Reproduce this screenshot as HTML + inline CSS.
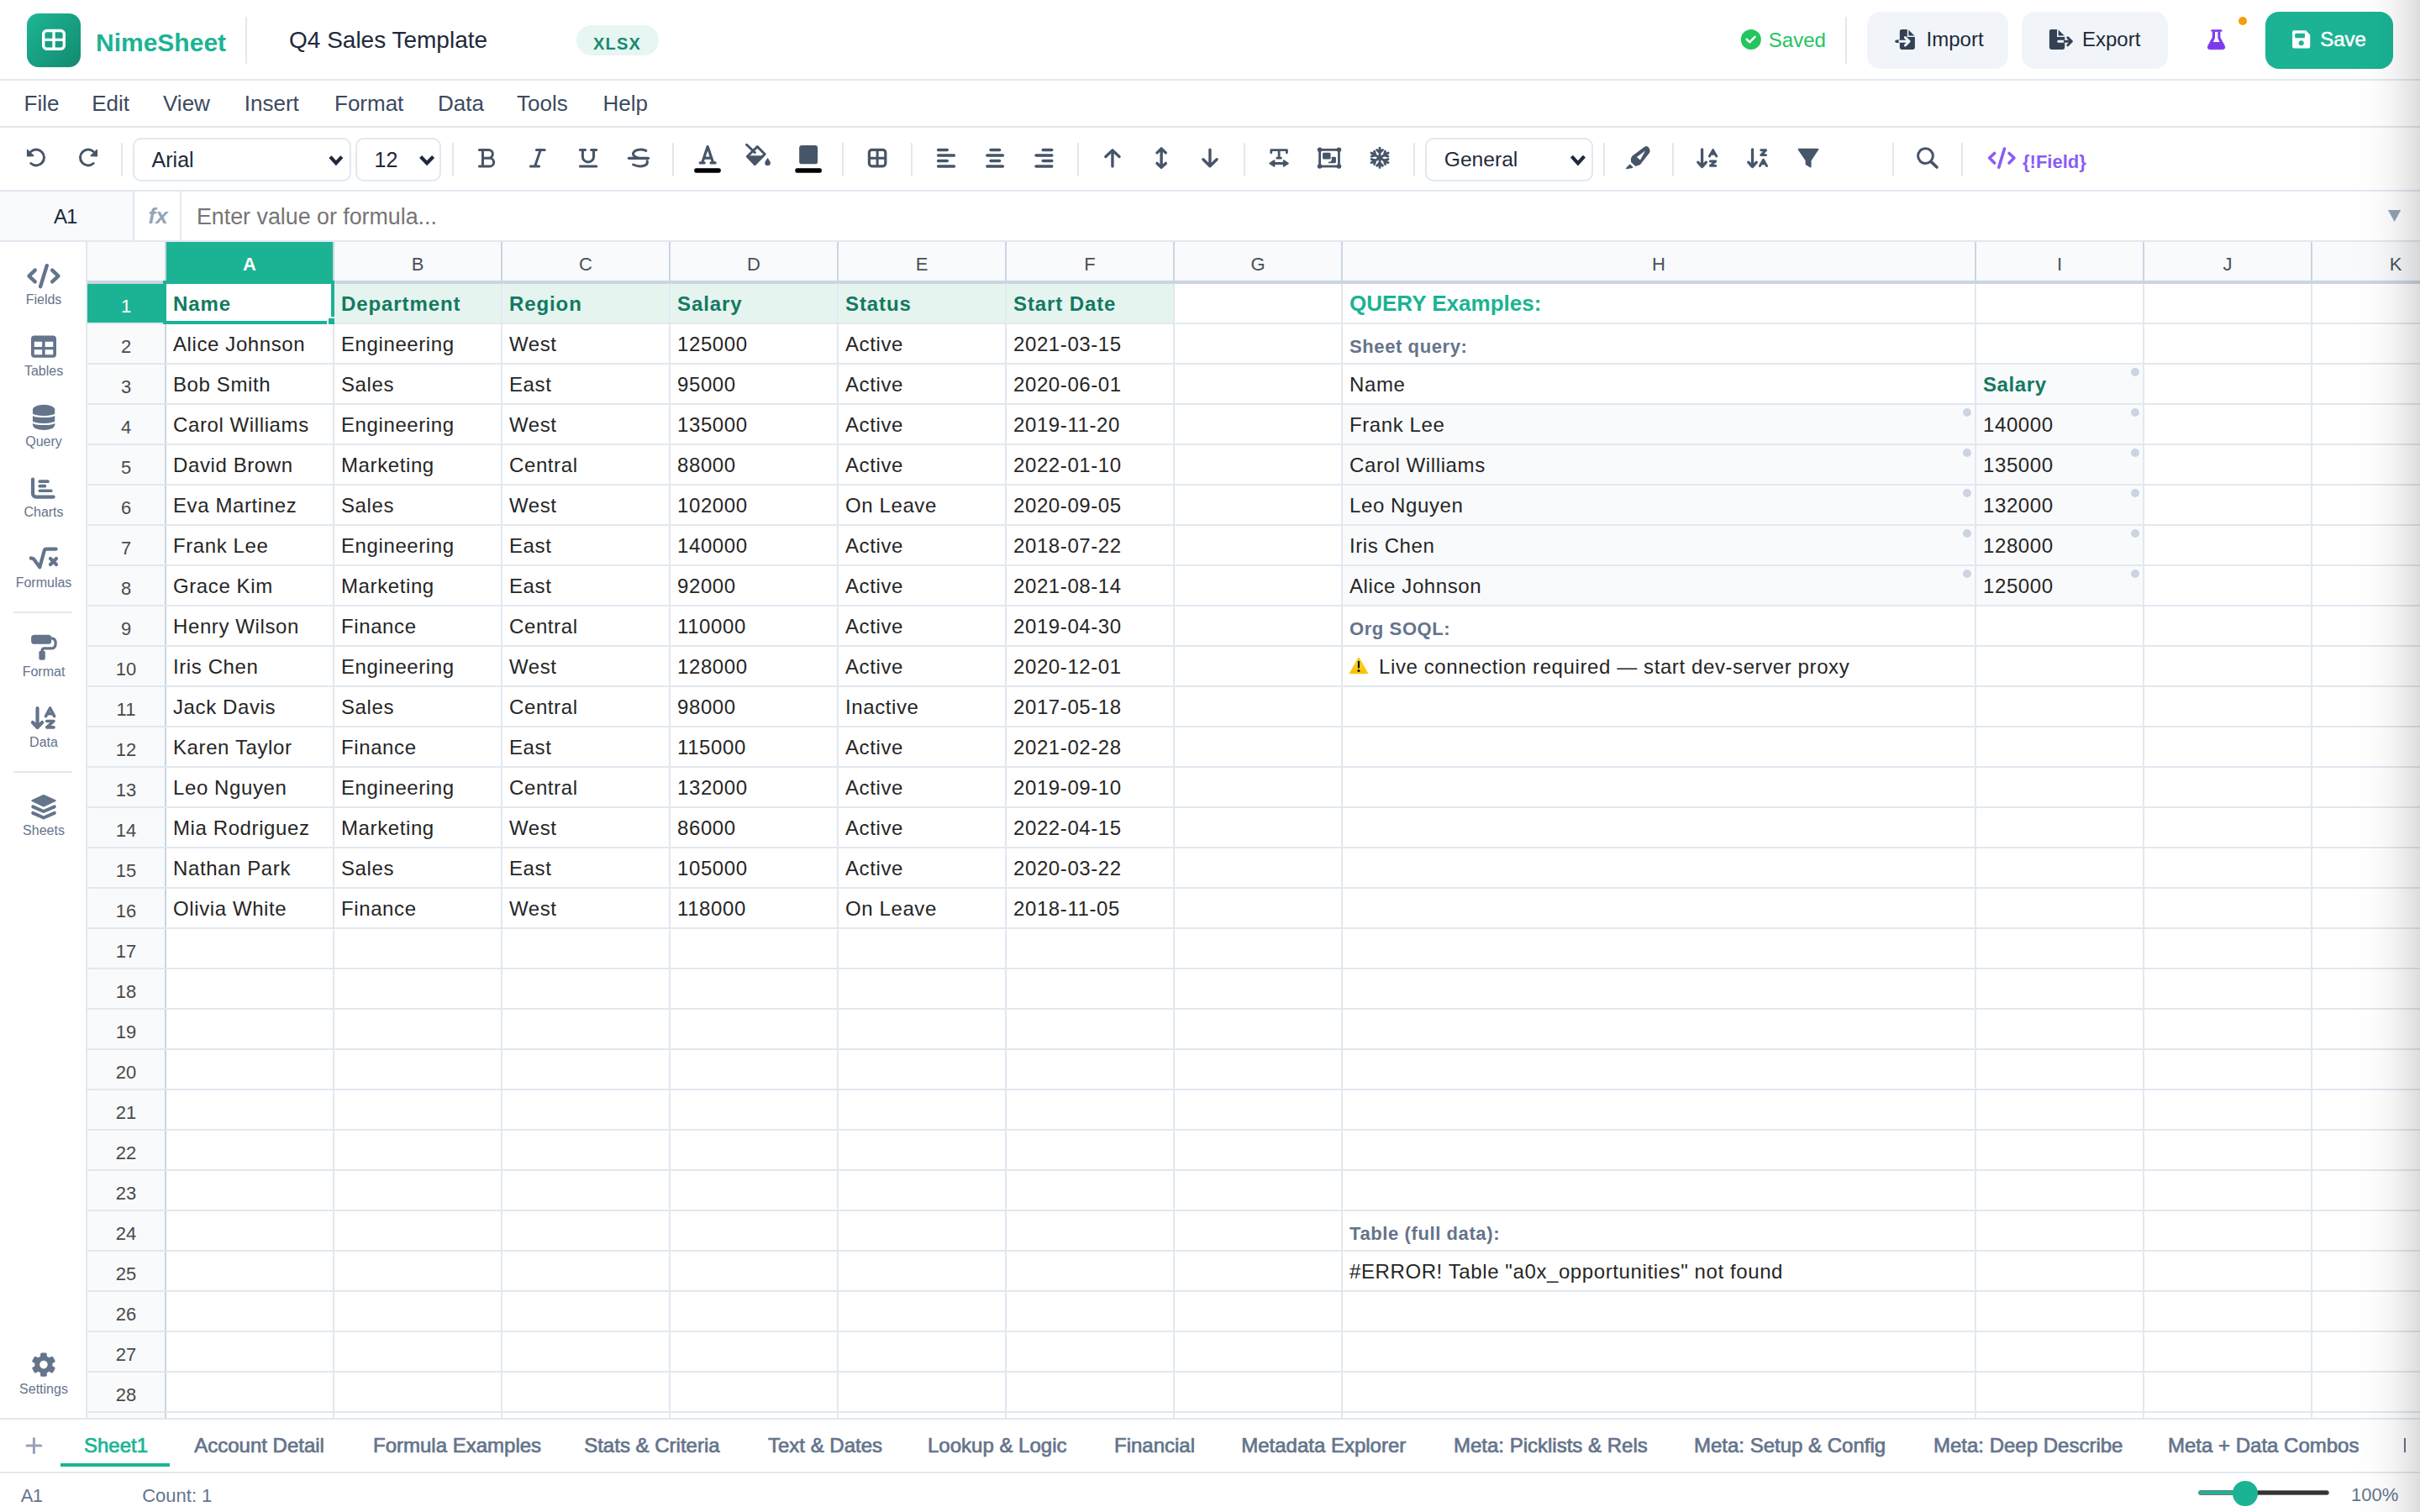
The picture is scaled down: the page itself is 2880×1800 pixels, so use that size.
<!DOCTYPE html><html><head><meta charset="utf-8"><style>
*{box-sizing:border-box;margin:0;padding:0}
html,body{width:1440px;height:900px;overflow:hidden;background:#fff;font-family:"Liberation Sans",sans-serif;}
.a{position:absolute}
.t{position:absolute;white-space:pre;line-height:1}
.hl{position:absolute;height:1px;background:#e2e8f0}
.vl{position:absolute;width:1px;background:#e2e8f0}
.cell{position:absolute;white-space:pre;font-size:12px;letter-spacing:0.3px;color:#262626;line-height:1;padding-left:4px;overflow:hidden}
.ch{position:absolute;top:144px;height:23px;text-align:center;font-size:11px;line-height:1;padding-top:8.0px;color:#4a5058;background:#f8fafc}
.rh{position:absolute;left:52px;width:46px;text-align:center;font-size:11px;line-height:1;color:#4a4a4a;background:#f8fafc;overflow:hidden}
.tab{position:absolute;font-size:12px;-webkit-text-stroke:0.35px currentColor;letter-spacing:0;color:#64748b;white-space:pre;line-height:1}
.sl{position:absolute;width:52px;left:0;text-align:center;font-size:8px;color:#64748b;line-height:1}
#ov{position:absolute;left:0;top:0;width:1440px;height:900px;overflow:visible}
@media (min-width:2000px){html{zoom:2}}
</style></head><body>
<div class="hl" style="left:0;top:47px;width:1440px"></div>
<div class="a" style="left:16px;top:8px;width:32px;height:32px;border-radius:7px;background:linear-gradient(135deg,#1db696,#128a6e)"></div>
<div class="t" style="left:57px;top:17.75px;font-size:15px;font-weight:bold;color:#1bb394">NimeSheet</div>
<div class="vl" style="left:146px;top:10px;height:28px"></div>
<div class="t" style="left:172px;top:16.88px;font-size:14px;color:#1e293b">Q4 Sales Template</div>
<div class="a" style="left:343px;top:15px;width:49px;height:18px;border-radius:9px;background:#e7f6f2"></div>
<div class="t" style="left:353px;top:20.82px;font-size:10px;font-weight:bold;letter-spacing:0.6px;color:#178a6e">XLSX</div>
<div class="t" style="left:1052.4px;top:17.83px;font-size:12px;color:#22c55e">Saved</div>
<div class="vl" style="left:1098px;top:10px;height:28px"></div>
<div class="a" style="left:1111px;top:7px;width:84px;height:34px;border-radius:8px;background:#f1f5f9"></div>
<div class="t" style="left:1146.3px;top:17.73px;font-size:12px;color:#1e293b">Import</div>
<div class="a" style="left:1203px;top:7px;width:87px;height:34px;border-radius:8px;background:#f1f5f9"></div>
<div class="t" style="left:1239px;top:17.73px;font-size:12px;color:#1e293b">Export</div>
<div class="a" style="left:1332px;top:10px;width:5px;height:5px;border-radius:50%;background:#f59e0b"></div>
<div class="a" style="left:1348px;top:7px;width:76px;height:34px;border-radius:8px;background:#1bb394"></div>
<div class="t" style="left:1380.6px;top:17.68px;font-size:12px;color:#fff;-webkit-text-stroke:0.25px #fff">Save</div>
<div class="hl" style="left:0;top:75px;width:1440px"></div>
<div class="t" style="left:14.3px;top:55.05px;font-size:13px;color:#3b4a5e">File</div>
<div class="t" style="left:54.6px;top:55.05px;font-size:13px;color:#3b4a5e">Edit</div>
<div class="t" style="left:97px;top:55.05px;font-size:13px;color:#3b4a5e">View</div>
<div class="t" style="left:145.4px;top:55.05px;font-size:13px;color:#3b4a5e">Insert</div>
<div class="t" style="left:199px;top:55.05px;font-size:13px;color:#3b4a5e">Format</div>
<div class="t" style="left:260.5px;top:55.05px;font-size:13px;color:#3b4a5e">Data</div>
<div class="t" style="left:307.5px;top:55.05px;font-size:13px;color:#3b4a5e">Tools</div>
<div class="t" style="left:358.7px;top:55.05px;font-size:13px;color:#3b4a5e">Help</div>
<div class="hl" style="left:0;top:113px;width:1440px"></div>
<div class="vl" style="left:72.0px;top:85px;height:20px"></div>
<div class="vl" style="left:269.2px;top:85px;height:20px"></div>
<div class="vl" style="left:400.0px;top:85px;height:20px"></div>
<div class="vl" style="left:501.0px;top:85px;height:20px"></div>
<div class="vl" style="left:542.0px;top:85px;height:20px"></div>
<div class="vl" style="left:641.0px;top:85px;height:20px"></div>
<div class="vl" style="left:740.1px;top:85px;height:20px"></div>
<div class="vl" style="left:841.0px;top:85px;height:20px"></div>
<div class="vl" style="left:954.1px;top:85px;height:20px"></div>
<div class="vl" style="left:994.9px;top:85px;height:20px"></div>
<div class="vl" style="left:1126.0px;top:85px;height:20px"></div>
<div class="vl" style="left:1166.9px;top:85px;height:20px"></div>
<div class="a" style="left:79px;top:82px;width:130px;height:26px;border:1px solid #e2e8f0;border-radius:5px"></div>
<div class="t" style="left:90.3px;top:89.01px;font-size:12.5px;color:#1e293b">Arial</div>
<div class="a" style="left:211.5px;top:82px;width:51px;height:26px;border:1px solid #e2e8f0;border-radius:5px"></div>
<div class="t" style="left:222.8px;top:89.01px;font-size:12.5px;color:#1e293b">12</div>
<div class="a" style="left:848.1px;top:82.1px;width:99.7px;height:25.8px;border:1px solid #e2e8f0;border-radius:5px"></div>
<div class="t" style="left:859.4px;top:88.82px;font-size:12.3px;color:#1e293b">General</div>
<div class="a" style="left:0;top:114px;width:79px;height:29px;background:#f8fafc"></div>
<div class="vl" style="left:79px;top:114px;height:29px"></div>
<div class="vl" style="left:107px;top:114px;height:29px"></div>
<div class="hl" style="left:0;top:143px;width:1440px"></div>
<div class="t" style="left:32px;top:122.78px;font-size:12px;letter-spacing:-0.5px;color:#1e293b">A1</div>
<div class="t" style="left:88.3px;top:122.0px;font-size:13px;font-weight:bold;font-style:italic;color:#94a3b8">fx</div>
<div class="t" style="left:117px;top:122.63px;font-size:13.4px;color:#757575">Enter value or formula...</div>
<div class="vl" style="left:51px;top:144px;height:700px"></div>
<div class="sl" style="top:174.73px">Fields</div>
<div class="sl" style="top:216.75px">Tables</div>
<div class="sl" style="top:259.15px">Query</div>
<div class="sl" style="top:300.8px">Charts</div>
<div class="sl" style="top:342.95px">Formulas</div>
<div class="sl" style="top:395.8px">Format</div>
<div class="sl" style="top:437.85px">Data</div>
<div class="sl" style="top:490.72px">Sheets</div>
<div class="sl" style="top:822.8px">Settings</div>
<div class="hl" style="left:8px;top:364px;width:35px"></div>
<div class="hl" style="left:8px;top:459px;width:35px"></div>
<div class="a" style="left:52px;top:144px;width:46px;height:23px;background:#f8fafc"></div>
<div class="ch" style="left:99px;width:99px;background:#1bb394;color:#fff;font-weight:bold">A</div>
<div class="vl" style="left:198px;top:169px;height:675px"></div>
<div class="vl" style="left:198px;top:144px;height:23px;background:#cbd5e1"></div>
<div class="ch" style="left:199px;width:99px;background:#f8fafc;color:#4a5058">B</div>
<div class="vl" style="left:298px;top:169px;height:675px"></div>
<div class="vl" style="left:298px;top:144px;height:23px;background:#cbd5e1"></div>
<div class="ch" style="left:299px;width:99px;background:#f8fafc;color:#4a5058">C</div>
<div class="vl" style="left:398px;top:169px;height:675px"></div>
<div class="vl" style="left:398px;top:144px;height:23px;background:#cbd5e1"></div>
<div class="ch" style="left:399px;width:99px;background:#f8fafc;color:#4a5058">D</div>
<div class="vl" style="left:498px;top:169px;height:675px"></div>
<div class="vl" style="left:498px;top:144px;height:23px;background:#cbd5e1"></div>
<div class="ch" style="left:499px;width:99px;background:#f8fafc;color:#4a5058">E</div>
<div class="vl" style="left:598px;top:169px;height:675px"></div>
<div class="vl" style="left:598px;top:144px;height:23px;background:#cbd5e1"></div>
<div class="ch" style="left:599px;width:99px;background:#f8fafc;color:#4a5058">F</div>
<div class="vl" style="left:698px;top:169px;height:675px"></div>
<div class="vl" style="left:698px;top:144px;height:23px;background:#cbd5e1"></div>
<div class="ch" style="left:699px;width:99px;background:#f8fafc;color:#4a5058">G</div>
<div class="vl" style="left:798px;top:169px;height:675px"></div>
<div class="vl" style="left:798px;top:144px;height:23px;background:#cbd5e1"></div>
<div class="ch" style="left:799px;width:376px;background:#f8fafc;color:#4a5058">H</div>
<div class="vl" style="left:1175px;top:169px;height:675px"></div>
<div class="vl" style="left:1175px;top:144px;height:23px;background:#cbd5e1"></div>
<div class="ch" style="left:1176px;width:99px;background:#f8fafc;color:#4a5058">I</div>
<div class="vl" style="left:1275px;top:169px;height:675px"></div>
<div class="vl" style="left:1275px;top:144px;height:23px;background:#cbd5e1"></div>
<div class="ch" style="left:1276px;width:99px;background:#f8fafc;color:#4a5058">J</div>
<div class="vl" style="left:1375px;top:169px;height:675px"></div>
<div class="vl" style="left:1375px;top:144px;height:23px;background:#cbd5e1"></div>
<div class="ch" style="left:1376px;width:99px;background:#f8fafc;color:#4a5058">K</div>
<div class="vl" style="left:1475px;top:169px;height:675px"></div>
<div class="vl" style="left:1475px;top:144px;height:23px;background:#cbd5e1"></div>
<div class="vl" style="left:98px;top:144px;height:700px;background:#cbd5e1"></div>
<div class="a" style="left:52px;top:167px;width:1388px;height:2px;background:#cbd5e1"></div>
<div class="rh" style="top:169px;height:23px;padding-top:7.8px;background:#1bb394;color:#fff">1</div>
<div class="hl" style="left:52px;top:192px;width:1388px"></div>
<div class="rh" style="top:193px;height:23px;padding-top:7.8px;background:#f8fafc;color:#4a4a4a">2</div>
<div class="hl" style="left:52px;top:216px;width:1388px"></div>
<div class="rh" style="top:217px;height:23px;padding-top:7.8px;background:#f8fafc;color:#4a4a4a">3</div>
<div class="hl" style="left:52px;top:240px;width:1388px"></div>
<div class="rh" style="top:241px;height:23px;padding-top:7.8px;background:#f8fafc;color:#4a4a4a">4</div>
<div class="hl" style="left:52px;top:264px;width:1388px"></div>
<div class="rh" style="top:265px;height:23px;padding-top:7.8px;background:#f8fafc;color:#4a4a4a">5</div>
<div class="hl" style="left:52px;top:288px;width:1388px"></div>
<div class="rh" style="top:289px;height:23px;padding-top:7.8px;background:#f8fafc;color:#4a4a4a">6</div>
<div class="hl" style="left:52px;top:312px;width:1388px"></div>
<div class="rh" style="top:313px;height:23px;padding-top:7.8px;background:#f8fafc;color:#4a4a4a">7</div>
<div class="hl" style="left:52px;top:336px;width:1388px"></div>
<div class="rh" style="top:337px;height:23px;padding-top:7.8px;background:#f8fafc;color:#4a4a4a">8</div>
<div class="hl" style="left:52px;top:360px;width:1388px"></div>
<div class="rh" style="top:361px;height:23px;padding-top:7.8px;background:#f8fafc;color:#4a4a4a">9</div>
<div class="hl" style="left:52px;top:384px;width:1388px"></div>
<div class="rh" style="top:385px;height:23px;padding-top:7.8px;background:#f8fafc;color:#4a4a4a">10</div>
<div class="hl" style="left:52px;top:408px;width:1388px"></div>
<div class="rh" style="top:409px;height:23px;padding-top:7.8px;background:#f8fafc;color:#4a4a4a">11</div>
<div class="hl" style="left:52px;top:432px;width:1388px"></div>
<div class="rh" style="top:433px;height:23px;padding-top:7.8px;background:#f8fafc;color:#4a4a4a">12</div>
<div class="hl" style="left:52px;top:456px;width:1388px"></div>
<div class="rh" style="top:457px;height:23px;padding-top:7.8px;background:#f8fafc;color:#4a4a4a">13</div>
<div class="hl" style="left:52px;top:480px;width:1388px"></div>
<div class="rh" style="top:481px;height:23px;padding-top:7.8px;background:#f8fafc;color:#4a4a4a">14</div>
<div class="hl" style="left:52px;top:504px;width:1388px"></div>
<div class="rh" style="top:505px;height:23px;padding-top:7.8px;background:#f8fafc;color:#4a4a4a">15</div>
<div class="hl" style="left:52px;top:528px;width:1388px"></div>
<div class="rh" style="top:529px;height:23px;padding-top:7.8px;background:#f8fafc;color:#4a4a4a">16</div>
<div class="hl" style="left:52px;top:552px;width:1388px"></div>
<div class="rh" style="top:553px;height:23px;padding-top:7.8px;background:#f8fafc;color:#4a4a4a">17</div>
<div class="hl" style="left:52px;top:576px;width:1388px"></div>
<div class="rh" style="top:577px;height:23px;padding-top:7.8px;background:#f8fafc;color:#4a4a4a">18</div>
<div class="hl" style="left:52px;top:600px;width:1388px"></div>
<div class="rh" style="top:601px;height:23px;padding-top:7.8px;background:#f8fafc;color:#4a4a4a">19</div>
<div class="hl" style="left:52px;top:624px;width:1388px"></div>
<div class="rh" style="top:625px;height:23px;padding-top:7.8px;background:#f8fafc;color:#4a4a4a">20</div>
<div class="hl" style="left:52px;top:648px;width:1388px"></div>
<div class="rh" style="top:649px;height:23px;padding-top:7.8px;background:#f8fafc;color:#4a4a4a">21</div>
<div class="hl" style="left:52px;top:672px;width:1388px"></div>
<div class="rh" style="top:673px;height:23px;padding-top:7.8px;background:#f8fafc;color:#4a4a4a">22</div>
<div class="hl" style="left:52px;top:696px;width:1388px"></div>
<div class="rh" style="top:697px;height:23px;padding-top:7.8px;background:#f8fafc;color:#4a4a4a">23</div>
<div class="hl" style="left:52px;top:720px;width:1388px"></div>
<div class="rh" style="top:721px;height:23px;padding-top:7.8px;background:#f8fafc;color:#4a4a4a">24</div>
<div class="hl" style="left:52px;top:744px;width:1388px"></div>
<div class="rh" style="top:745px;height:23px;padding-top:7.8px;background:#f8fafc;color:#4a4a4a">25</div>
<div class="hl" style="left:52px;top:768px;width:1388px"></div>
<div class="rh" style="top:769px;height:23px;padding-top:7.8px;background:#f8fafc;color:#4a4a4a">26</div>
<div class="hl" style="left:52px;top:792px;width:1388px"></div>
<div class="rh" style="top:793px;height:23px;padding-top:7.8px;background:#f8fafc;color:#4a4a4a">27</div>
<div class="hl" style="left:52px;top:816px;width:1388px"></div>
<div class="rh" style="top:817px;height:23px;padding-top:7.8px;background:#f8fafc;color:#4a4a4a">28</div>
<div class="hl" style="left:52px;top:840px;width:1388px"></div>
<div class="rh" style="top:841px;height:3px;background:#f8fafc"></div>
<div class="a" style="left:199px;top:169px;width:499px;height:23px;background:#e6f4f0"></div>
<div class="vl" style="left:298px;top:169px;height:23px"></div>
<div class="vl" style="left:398px;top:169px;height:23px"></div>
<div class="vl" style="left:498px;top:169px;height:23px"></div>
<div class="vl" style="left:598px;top:169px;height:23px"></div>
<div class="a" style="left:799px;top:241px;width:376px;height:23px;background:#f8fafc"></div>
<div class="a" style="left:1176px;top:241px;width:99px;height:23px;background:#f8fafc"></div>
<div class="a" style="left:1168px;top:243px;width:5px;height:5px;border-radius:50%;background:#cbd5e1"></div>
<div class="a" style="left:1268px;top:243px;width:5px;height:5px;border-radius:50%;background:#cbd5e1"></div>
<div class="a" style="left:799px;top:265px;width:376px;height:23px;background:#f8fafc"></div>
<div class="a" style="left:1176px;top:265px;width:99px;height:23px;background:#f8fafc"></div>
<div class="a" style="left:1168px;top:267px;width:5px;height:5px;border-radius:50%;background:#cbd5e1"></div>
<div class="a" style="left:1268px;top:267px;width:5px;height:5px;border-radius:50%;background:#cbd5e1"></div>
<div class="a" style="left:799px;top:289px;width:376px;height:23px;background:#f8fafc"></div>
<div class="a" style="left:1176px;top:289px;width:99px;height:23px;background:#f8fafc"></div>
<div class="a" style="left:1168px;top:291px;width:5px;height:5px;border-radius:50%;background:#cbd5e1"></div>
<div class="a" style="left:1268px;top:291px;width:5px;height:5px;border-radius:50%;background:#cbd5e1"></div>
<div class="a" style="left:799px;top:313px;width:376px;height:23px;background:#f8fafc"></div>
<div class="a" style="left:1176px;top:313px;width:99px;height:23px;background:#f8fafc"></div>
<div class="a" style="left:1168px;top:315px;width:5px;height:5px;border-radius:50%;background:#cbd5e1"></div>
<div class="a" style="left:1268px;top:315px;width:5px;height:5px;border-radius:50%;background:#cbd5e1"></div>
<div class="a" style="left:799px;top:337px;width:376px;height:23px;background:#f8fafc"></div>
<div class="a" style="left:1176px;top:337px;width:99px;height:23px;background:#f8fafc"></div>
<div class="a" style="left:1168px;top:339px;width:5px;height:5px;border-radius:50%;background:#cbd5e1"></div>
<div class="a" style="left:1268px;top:339px;width:5px;height:5px;border-radius:50%;background:#cbd5e1"></div>
<div class="a" style="left:1176px;top:217px;width:99px;height:23px;background:#f8fafc"></div>
<div class="a" style="left:1268px;top:219px;width:5px;height:5px;border-radius:50%;background:#cbd5e1"></div>
<div class="cell" style="left:99px;top:174.88px;width:99px;height:18px;font-weight:bold;color:#137a60;letter-spacing:0.45px">Name</div>
<div class="cell" style="left:199px;top:174.88px;width:99px;height:18px;font-weight:bold;color:#137a60;letter-spacing:0.45px">Department</div>
<div class="cell" style="left:299px;top:174.88px;width:99px;height:18px;font-weight:bold;color:#137a60;letter-spacing:0.45px">Region</div>
<div class="cell" style="left:399px;top:174.88px;width:99px;height:18px;font-weight:bold;color:#137a60;letter-spacing:0.45px">Salary</div>
<div class="cell" style="left:499px;top:174.88px;width:99px;height:18px;font-weight:bold;color:#137a60;letter-spacing:0.45px">Status</div>
<div class="cell" style="left:599px;top:174.88px;width:99px;height:18px;font-weight:bold;color:#137a60;letter-spacing:0.45px">Start Date</div>
<div class="cell" style="left:99px;top:198.88px;width:99px;height:18px;">Alice Johnson</div>
<div class="cell" style="left:199px;top:198.88px;width:99px;height:18px;">Engineering</div>
<div class="cell" style="left:299px;top:198.88px;width:99px;height:18px;">West</div>
<div class="cell" style="left:399px;top:198.88px;width:99px;height:18px;">125000</div>
<div class="cell" style="left:499px;top:198.88px;width:99px;height:18px;">Active</div>
<div class="cell" style="left:599px;top:198.88px;width:99px;height:18px;">2021-03-15</div>
<div class="cell" style="left:99px;top:222.88px;width:99px;height:18px;">Bob Smith</div>
<div class="cell" style="left:199px;top:222.88px;width:99px;height:18px;">Sales</div>
<div class="cell" style="left:299px;top:222.88px;width:99px;height:18px;">East</div>
<div class="cell" style="left:399px;top:222.88px;width:99px;height:18px;">95000</div>
<div class="cell" style="left:499px;top:222.88px;width:99px;height:18px;">Active</div>
<div class="cell" style="left:599px;top:222.88px;width:99px;height:18px;">2020-06-01</div>
<div class="cell" style="left:99px;top:246.88px;width:99px;height:18px;">Carol Williams</div>
<div class="cell" style="left:199px;top:246.88px;width:99px;height:18px;">Engineering</div>
<div class="cell" style="left:299px;top:246.88px;width:99px;height:18px;">West</div>
<div class="cell" style="left:399px;top:246.88px;width:99px;height:18px;">135000</div>
<div class="cell" style="left:499px;top:246.88px;width:99px;height:18px;">Active</div>
<div class="cell" style="left:599px;top:246.88px;width:99px;height:18px;">2019-11-20</div>
<div class="cell" style="left:99px;top:270.88px;width:99px;height:18px;">David Brown</div>
<div class="cell" style="left:199px;top:270.88px;width:99px;height:18px;">Marketing</div>
<div class="cell" style="left:299px;top:270.88px;width:99px;height:18px;">Central</div>
<div class="cell" style="left:399px;top:270.88px;width:99px;height:18px;">88000</div>
<div class="cell" style="left:499px;top:270.88px;width:99px;height:18px;">Active</div>
<div class="cell" style="left:599px;top:270.88px;width:99px;height:18px;">2022-01-10</div>
<div class="cell" style="left:99px;top:294.88px;width:99px;height:18px;">Eva Martinez</div>
<div class="cell" style="left:199px;top:294.88px;width:99px;height:18px;">Sales</div>
<div class="cell" style="left:299px;top:294.88px;width:99px;height:18px;">West</div>
<div class="cell" style="left:399px;top:294.88px;width:99px;height:18px;">102000</div>
<div class="cell" style="left:499px;top:294.88px;width:99px;height:18px;">On Leave</div>
<div class="cell" style="left:599px;top:294.88px;width:99px;height:18px;">2020-09-05</div>
<div class="cell" style="left:99px;top:318.88px;width:99px;height:18px;">Frank Lee</div>
<div class="cell" style="left:199px;top:318.88px;width:99px;height:18px;">Engineering</div>
<div class="cell" style="left:299px;top:318.88px;width:99px;height:18px;">East</div>
<div class="cell" style="left:399px;top:318.88px;width:99px;height:18px;">140000</div>
<div class="cell" style="left:499px;top:318.88px;width:99px;height:18px;">Active</div>
<div class="cell" style="left:599px;top:318.88px;width:99px;height:18px;">2018-07-22</div>
<div class="cell" style="left:99px;top:342.88px;width:99px;height:18px;">Grace Kim</div>
<div class="cell" style="left:199px;top:342.88px;width:99px;height:18px;">Marketing</div>
<div class="cell" style="left:299px;top:342.88px;width:99px;height:18px;">East</div>
<div class="cell" style="left:399px;top:342.88px;width:99px;height:18px;">92000</div>
<div class="cell" style="left:499px;top:342.88px;width:99px;height:18px;">Active</div>
<div class="cell" style="left:599px;top:342.88px;width:99px;height:18px;">2021-08-14</div>
<div class="cell" style="left:99px;top:366.88px;width:99px;height:18px;">Henry Wilson</div>
<div class="cell" style="left:199px;top:366.88px;width:99px;height:18px;">Finance</div>
<div class="cell" style="left:299px;top:366.88px;width:99px;height:18px;">Central</div>
<div class="cell" style="left:399px;top:366.88px;width:99px;height:18px;">110000</div>
<div class="cell" style="left:499px;top:366.88px;width:99px;height:18px;">Active</div>
<div class="cell" style="left:599px;top:366.88px;width:99px;height:18px;">2019-04-30</div>
<div class="cell" style="left:99px;top:390.88px;width:99px;height:18px;">Iris Chen</div>
<div class="cell" style="left:199px;top:390.88px;width:99px;height:18px;">Engineering</div>
<div class="cell" style="left:299px;top:390.88px;width:99px;height:18px;">West</div>
<div class="cell" style="left:399px;top:390.88px;width:99px;height:18px;">128000</div>
<div class="cell" style="left:499px;top:390.88px;width:99px;height:18px;">Active</div>
<div class="cell" style="left:599px;top:390.88px;width:99px;height:18px;">2020-12-01</div>
<div class="cell" style="left:99px;top:414.88px;width:99px;height:18px;">Jack Davis</div>
<div class="cell" style="left:199px;top:414.88px;width:99px;height:18px;">Sales</div>
<div class="cell" style="left:299px;top:414.88px;width:99px;height:18px;">Central</div>
<div class="cell" style="left:399px;top:414.88px;width:99px;height:18px;">98000</div>
<div class="cell" style="left:499px;top:414.88px;width:99px;height:18px;">Inactive</div>
<div class="cell" style="left:599px;top:414.88px;width:99px;height:18px;">2017-05-18</div>
<div class="cell" style="left:99px;top:438.88px;width:99px;height:18px;">Karen Taylor</div>
<div class="cell" style="left:199px;top:438.88px;width:99px;height:18px;">Finance</div>
<div class="cell" style="left:299px;top:438.88px;width:99px;height:18px;">East</div>
<div class="cell" style="left:399px;top:438.88px;width:99px;height:18px;">115000</div>
<div class="cell" style="left:499px;top:438.88px;width:99px;height:18px;">Active</div>
<div class="cell" style="left:599px;top:438.88px;width:99px;height:18px;">2021-02-28</div>
<div class="cell" style="left:99px;top:462.88px;width:99px;height:18px;">Leo Nguyen</div>
<div class="cell" style="left:199px;top:462.88px;width:99px;height:18px;">Engineering</div>
<div class="cell" style="left:299px;top:462.88px;width:99px;height:18px;">Central</div>
<div class="cell" style="left:399px;top:462.88px;width:99px;height:18px;">132000</div>
<div class="cell" style="left:499px;top:462.88px;width:99px;height:18px;">Active</div>
<div class="cell" style="left:599px;top:462.88px;width:99px;height:18px;">2019-09-10</div>
<div class="cell" style="left:99px;top:486.88px;width:99px;height:18px;">Mia Rodriguez</div>
<div class="cell" style="left:199px;top:486.88px;width:99px;height:18px;">Marketing</div>
<div class="cell" style="left:299px;top:486.88px;width:99px;height:18px;">West</div>
<div class="cell" style="left:399px;top:486.88px;width:99px;height:18px;">86000</div>
<div class="cell" style="left:499px;top:486.88px;width:99px;height:18px;">Active</div>
<div class="cell" style="left:599px;top:486.88px;width:99px;height:18px;">2022-04-15</div>
<div class="cell" style="left:99px;top:510.88px;width:99px;height:18px;">Nathan Park</div>
<div class="cell" style="left:199px;top:510.88px;width:99px;height:18px;">Sales</div>
<div class="cell" style="left:299px;top:510.88px;width:99px;height:18px;">East</div>
<div class="cell" style="left:399px;top:510.88px;width:99px;height:18px;">105000</div>
<div class="cell" style="left:499px;top:510.88px;width:99px;height:18px;">Active</div>
<div class="cell" style="left:599px;top:510.88px;width:99px;height:18px;">2020-03-22</div>
<div class="cell" style="left:99px;top:534.88px;width:99px;height:18px;">Olivia White</div>
<div class="cell" style="left:199px;top:534.88px;width:99px;height:18px;">Finance</div>
<div class="cell" style="left:299px;top:534.88px;width:99px;height:18px;">West</div>
<div class="cell" style="left:399px;top:534.88px;width:99px;height:18px;">118000</div>
<div class="cell" style="left:499px;top:534.88px;width:99px;height:18px;">On Leave</div>
<div class="cell" style="left:599px;top:534.88px;width:99px;height:18px;">2018-11-05</div>
<div class="cell" style="left:799px;top:173.8px;width:376px;height:18px;font-size:13px;font-weight:bold;color:#1bb394;letter-spacing:0px">QUERY Examples:</div>
<div class="cell" style="left:799px;top:200.81px;width:376px;height:18px;font-size:11px;font-weight:bold;color:#64748b;letter-spacing:0.3px">Sheet query:</div>
<div class="cell" style="left:799px;top:222.88px;width:376px;height:18px;">Name</div>
<div class="cell" style="left:1176px;top:222.88px;width:99px;height:18px;font-weight:bold;color:#137a60;letter-spacing:0.3px">Salary</div>
<div class="cell" style="left:799px;top:246.88px;width:376px;height:18px;">Frank Lee</div>
<div class="cell" style="left:1176px;top:246.88px;width:99px;height:18px;">140000</div>
<div class="cell" style="left:799px;top:270.88px;width:376px;height:18px;">Carol Williams</div>
<div class="cell" style="left:1176px;top:270.88px;width:99px;height:18px;">135000</div>
<div class="cell" style="left:799px;top:294.88px;width:376px;height:18px;">Leo Nguyen</div>
<div class="cell" style="left:1176px;top:294.88px;width:99px;height:18px;">132000</div>
<div class="cell" style="left:799px;top:318.88px;width:376px;height:18px;">Iris Chen</div>
<div class="cell" style="left:1176px;top:318.88px;width:99px;height:18px;">128000</div>
<div class="cell" style="left:799px;top:342.88px;width:376px;height:18px;">Alice Johnson</div>
<div class="cell" style="left:1176px;top:342.88px;width:99px;height:18px;">125000</div>
<div class="cell" style="left:799px;top:368.81px;width:376px;height:18px;font-size:11px;font-weight:bold;color:#64748b;letter-spacing:0.3px">Org SOQL:</div>
<div class="cell" style="left:799px;top:390.88px;width:376px;height:18px;"><span style="display:inline-block;width:17.5px"></span>Live connection required — start dev-server proxy</div>
<div class="cell" style="left:799px;top:728.81px;width:376px;height:18px;font-size:11px;font-weight:bold;color:#64748b;letter-spacing:0.3px">Table (full data):</div>
<div class="cell" style="left:799px;top:750.88px;width:376px;height:18px;">#ERROR! Table "a0x_opportunities" not found</div>
<div class="a" style="left:97px;top:167px;width:102px;height:26px;border:2px solid #1bb394"></div>
<div class="a" style="left:194.6px;top:188.4px;width:4.4px;height:4.6px;background:#1bb394;border-top:1px solid #fff;border-left:1px solid #fff"></div>
<div class="hl" style="left:0;top:844px;width:1440px"></div>
<div class="hl" style="left:0;top:876px;width:1440px"></div>
<div class="tab" style="left:50px;top:854.28px;color:#1bb394">Sheet1</div>
<div class="tab" style="left:115.6px;top:854.28px;color:#64748b">Account Detail</div>
<div class="tab" style="left:222px;top:854.28px;color:#64748b">Formula Examples</div>
<div class="tab" style="left:347.6px;top:854.28px;color:#64748b">Stats &amp; Criteria</div>
<div class="tab" style="left:457px;top:854.28px;color:#64748b">Text &amp; Dates</div>
<div class="tab" style="left:552px;top:854.28px;color:#64748b">Lookup &amp; Logic</div>
<div class="tab" style="left:663px;top:854.28px;color:#64748b">Financial</div>
<div class="tab" style="left:738.6px;top:854.28px;color:#64748b">Metadata Explorer</div>
<div class="tab" style="left:865px;top:854.28px;color:#64748b">Meta: Picklists &amp; Rels</div>
<div class="tab" style="left:1008px;top:854.28px;color:#64748b">Meta: Setup &amp; Config</div>
<div class="tab" style="left:1150.5px;top:854.28px;color:#64748b">Meta: Deep Describe</div>
<div class="tab" style="left:1290px;top:854.28px;color:#64748b">Meta + Data Combos</div>
<div class="a" style="left:36px;top:871px;width:65px;height:2px;background:#1bb394"></div>
<div class="a" style="left:1430.5px;top:856px;width:1px;height:8.5px;background:#64748b"></div>
<div class="t" style="left:12.4px;top:884.76px;font-size:11px;letter-spacing:-0.4px;color:#64748b">A1</div>
<div class="t" style="left:84.6px;top:884.76px;font-size:11px;color:#64748b">Count: 1</div>
<div class="a" style="left:1308.1px;top:887.1px;width:77.9px;height:2.9px;border-radius:1.5px;background:#333;border:0.5px solid #777"></div>
<div class="a" style="left:1308.6px;top:887.6px;width:22px;height:1.9px;background:#1bb394"></div>
<div class="a" style="left:1328.6px;top:881.5px;width:14.8px;height:14.8px;border-radius:50%;background:#1bb394"></div>
<div class="t" style="left:1399px;top:884.71px;font-size:11px;color:#64748b">100%</div>
<div class="t" style="left:1203.5px;top:90.78px;font-size:11px;font-weight:bold;color:#8b5cf6">{!Field}</div>
<svg id="ov" viewBox="0 0 1440 900" width="1440" height="900"><rect x="25.85" y="18.25" width="12.3" height="10.9" rx="2" fill="none" stroke="#fff" stroke-width="1.7"/><path d="M32 18.4 V29 M26 23.7 H38" stroke="#fff" stroke-width="1.7"/><circle cx="1041.9" cy="23.45" r="6" fill="#22c55e"/><path d="M1039.3 23.4 L1041.16 25.1 L1044.25 21.9" fill="none" stroke="#fff" stroke-width="1.3" stroke-linecap="round" stroke-linejoin="round"/><path d="M1131.6 17.46 H1135.4 L1139.44 21.5 V28.3 A1.16 1.16 0 0 1 1138.28 29.46 H1131.6 A1.16 1.16 0 0 1 1130.42 28.3 V18.6 A1.16 1.16 0 0 1 1131.6 17.46Z" fill="#334155"/><path d="M1135.3 17.3 V21.6 H1139.6" fill="none" stroke="#f1f5f9" stroke-width="0.8"/><path d="M1128.5 24.65 H1130.42" stroke="#334155" stroke-width="1.7" stroke-linecap="round"/><path d="M1130.42 24.65 H1135.8 M1133.7 22.3 L1136.1 24.65 L1133.7 27" fill="none" stroke="#f1f5f9" stroke-width="1.5" stroke-linecap="round" stroke-linejoin="round"/><path d="M1220.6 17.46 H1224.5 L1228.63 21.5 V28.3 A1.16 1.16 0 0 1 1227.47 29.46 H1220.6 A1.16 1.16 0 0 1 1219.45 28.3 V18.6 A1.16 1.16 0 0 1 1220.6 17.46Z" fill="#334155"/><path d="M1224.4 17.3 V21.6 H1228.8" fill="none" stroke="#f1f5f9" stroke-width="0.8"/><path d="M1224.9 24.65 H1228.63" stroke="#f1f5f9" stroke-width="1.5" stroke-linecap="round"/><path d="M1228.63 24.65 H1232.6 M1230.4 22.4 L1232.7 24.65 L1230.4 26.9" fill="none" stroke="#334155" stroke-width="1.5" stroke-linecap="round" stroke-linejoin="round"/><path d="M1316.6 18.9 V22.3 L1313.9 27.2 Q1313.1 29.4 1315.3 29.4 H1322.3 Q1324.5 29.4 1323.7 27.2 L1321 22.3 V18.9 Z" fill="#7c3aed" stroke="#7c3aed" stroke-width="0.4" stroke-linejoin="round"/><path d="M1318.0 18.9 V22.6 L1316.9 25.04 H1320.8 L1319.7 22.6 V18.9 Z" fill="#fff"/><path d="M1316.3 18.25 H1321.6" stroke="#7c3aed" stroke-width="1.3" stroke-linecap="round"/><path d="M1365.0 18.15 H1372.1 L1374.63 20.7 V27.7 A1.05 1.05 0 0 1 1373.58 28.74 H1365.08 A1.05 1.05 0 0 1 1364.03 27.7 V19.2 A1.05 1.05 0 0 1 1365.0 18.15Z" fill="#fff"/><rect x="1365.6" y="19.9" width="5.9" height="2.76" rx="0.5" fill="#1bb394"/><circle cx="1369.33" cy="25.6" r="1.5" fill="#1bb394"/><path d="M18.4 90.25 A4.7 4.7 0 1 1 18.4 97.25" fill="none" stroke="#475569" stroke-width="1.5" stroke-linecap="round"/><path d="M16.3 89.3 L16.3 92.9 L19.9 92.8 Z" fill="#475569" stroke="#475569" stroke-width="0.7" stroke-linejoin="round"/><g transform="translate(73.98,0) scale(-1,1)"><path d="M18.4 90.25 A4.7 4.7 0 1 1 18.4 97.25" fill="none" stroke="#475569" stroke-width="1.5" stroke-linecap="round"/><path d="M16.3 89.3 L16.3 92.9 L19.9 92.8 Z" fill="#475569" stroke="#475569" stroke-width="0.7" stroke-linejoin="round"/></g><path d="M285.2 89.19 H290.7 A2.48 2.48 0 0 1 290.7 94.15 H287.24 M287.24 89.19 V98.99 M287.24 94.15 H291.4 A2.42 2.42 0 0 1 291.4 98.99 H285.2" fill="none" stroke="#475569" stroke-width="1.5" stroke-linecap="round" stroke-linejoin="round"/><path d="M319.2 89.19 H324.1 M315.7 98.99 H320.8 M321.65 89.19 L318.3 98.99" fill="none" stroke="#475569" stroke-width="1.5" stroke-linecap="round"/><path d="M345.2 89.19 H348.3 M351.78 89.19 H354.87 M346.69 89.19 V93.2 A3.28 3.28 0 0 0 353.26 93.2 V89.19 M345.2 98.99 H354.87" fill="none" stroke="#475569" stroke-width="1.5" stroke-linecap="round"/><path d="M374.2 94.15 H385.74" stroke="#475569" stroke-width="1.6" stroke-linecap="round"/><path d="M384.4 89.7 C382.5 88.9 378.3 88.5 377 90.7 C376 92.4 378 93.6 380 94.15 M385.1 95.9 C385.6 97.6 384 99.1 380.6 99.0 C379.1 98.95 377.7 98.4 376.8 98.0" fill="none" stroke="#475569" stroke-width="1.5" stroke-linecap="round"/><path d="M417.9 96.7 L421.08 87.3 L424.3 96.7 M418.9 94.1 H423.2 M416.6 96.93 H419.1 M423.0 96.93 H425.6" fill="none" stroke="#475569" stroke-width="1.6" stroke-linecap="round" stroke-linejoin="round"/><rect x="413.1" y="100.1" width="15.8" height="2.8" rx="1.2" fill="#000"/><path d="M450.65 87.3 L455.1 91.72 L449.17 97.6 L444.7 93.1 Z" fill="none" stroke="#475569" stroke-width="1.5" stroke-linejoin="round"/><path d="M444.4 93.02 H454.2 L449.17 98.2 Z" fill="#475569" stroke="#475569" stroke-width="0.9" stroke-linejoin="round"/><path d="M444.26 86.14 L449.2 90.79" stroke="#475569" stroke-width="1.5" stroke-linecap="round"/><path d="M456.79 94.0 Q455.1 96.2 455.12 96.93 A1.67 1.67 0 0 0 458.46 96.93 Q458.48 96.2 456.79 94.0Z" fill="#475569"/><rect x="475.58" y="86.5" width="10.97" height="11.17" rx="1.6" fill="#475569"/><rect x="473.16" y="100.1" width="15.8" height="2.8" rx="1.2" fill="#000"/><rect x="517.2" y="89.2" width="9.7" height="9.7" rx="1.6" fill="none" stroke="#475569" stroke-width="1.6"/><path d="M522.06 89.2 V98.9 M517.2 94.07 H526.9" stroke="#475569" stroke-width="1.5"/><path d="M558.3 89.21 H563.64 M558.3 92.48 H567.7 M558.3 95.72 H563.64 M558.3 98.98 H567.7 " stroke="#475569" stroke-width="1.74" stroke-linecap="round"/><path d="M589.5 89.21 H594.8 M587.4 92.48 H596.7 M589.5 95.72 H594.8 M587.4 98.98 H596.7 " stroke="#475569" stroke-width="1.74" stroke-linecap="round"/><path d="M620.6 89.21 H625.9 M616.5 92.48 H625.9 M620.6 95.72 H625.9 M616.5 98.98 H625.9 " stroke="#475569" stroke-width="1.74" stroke-linecap="round"/><path d="M661.97 89.6 V99.0 M657.93 93.24 L661.97 89.44 L666.03 93.24" fill="none" stroke="#475569" stroke-width="1.7" stroke-linecap="round" stroke-linejoin="round"/><path d="M691.06 88.6 V99.5 M688.51 90.93 L691.06 88.45 L693.64 90.93 M688.51 97.21 L691.06 99.69 L693.64 97.21" fill="none" stroke="#475569" stroke-width="1.7" stroke-linecap="round" stroke-linejoin="round"/><path d="M719.98 89.11 V98.7 M715.95 94.9 L719.98 98.86 L724.05 94.9" fill="none" stroke="#475569" stroke-width="1.7" stroke-linecap="round" stroke-linejoin="round"/><path d="M756.4 90.93 V89.35 H765.7 V90.93 M761.06 89.35 V94.09 M759.9 94.09 H762.2 M757.5 97.25 H764.6" fill="none" stroke="#475569" stroke-width="1.4" stroke-linecap="round" stroke-linejoin="round"/><path d="M755.6 97.25 L758.3 95.5 V99.0 Z M766.5 97.25 L763.8 95.5 V99.0 Z" fill="#475569" stroke="#475569" stroke-width="0.8" stroke-linejoin="round"/><rect x="785.3" y="89.17" width="11.42" height="9.84" fill="none" stroke="#475569" stroke-width="1.4"/><circle cx="785.3" cy="89.17" r="1.4" fill="#475569"/><circle cx="785.3" cy="99.01" r="1.4" fill="#475569"/><circle cx="796.72" cy="89.17" r="1.4" fill="#475569"/><circle cx="796.72" cy="99.01" r="1.4" fill="#475569"/><rect x="787.06" y="90.93" width="4.74" height="3.86" rx="0.7" fill="#475569"/><path d="M792.4 93.39 H794.3 A0.66 0.66 0 0 1 794.96 94.05 V96.4 A0.66 0.66 0 0 1 794.3 97.08 H790.4 V96.2 A1.4 1.4 0 0 0 792.4 94.9 Z" fill="#475569"/><path d="M821.02 88.12 L821.02 99.72 M816.00 91.02 L826.04 96.82 M826.04 91.02 L816.00 96.82 M819.32 98.62 L821.02 96.92 L822.72 98.62 M816.10 94.80 L818.42 95.42 L817.80 97.74 M817.80 90.10 L818.42 92.42 L816.10 93.04 M822.72 89.22 L821.02 90.92 L819.32 89.22 M825.94 93.04 L823.62 92.42 L824.24 90.10 M824.24 97.74 L823.62 95.42 L825.94 94.80 " fill="none" stroke="#475569" stroke-width="1.45" stroke-linecap="round" stroke-linejoin="round"/><path d="M196.5 93.30000000000001 L199.95 97.10000000000001 L203.4 93.30000000000001" fill="none" stroke="#1e293b" stroke-width="2.1" stroke-linejoin="miter"/><path d="M250.3 93.30000000000001 L254.05 97.10000000000001 L257.8 93.30000000000001" fill="none" stroke="#1e293b" stroke-width="2.1" stroke-linejoin="miter"/><path d="M935.1999999999999 93.10000000000001 L938.95 97.2 L942.7 93.10000000000001" fill="none" stroke="#1e293b" stroke-width="2.1" stroke-linejoin="miter"/><path d="M967.85 100.25 L969.9 98.2 L971.3 99.6 Z" fill="#475569" stroke="#475569" stroke-width="0.8" stroke-linejoin="round"/><path d="M971.57 93.02 L978.8 87.64 Q980 86.9 980.9 88.2 L981.28 89.0 Q981.8 89.9 981.1 90.9 L975.7 97.77 L973.3 98.6 L970.9 96.4 L970.8 94.46 Z" fill="#475569" stroke="#475569" stroke-width="0.7" stroke-linejoin="round"/><path d="M973.9 93.5 L979.0 89.8 L976.0 95.3 Z" fill="#fff"/><path d="M1012.8 88.9 V99.2 M1010.4 96.6 L1012.8 99.3 L1015.1999999999999 96.6" fill="none" stroke="#475569" stroke-width="1.65" stroke-linecap="round" stroke-linejoin="round"/><path d="M1017.2 93.0 L1019.3 89.3 L1021.4 93.0 M1018.2 91.6 H1020.4" fill="none" stroke="#475569" stroke-width="1.45" stroke-linecap="round" stroke-linejoin="round"/><path d="M1017.7 96.0 H1020.9 L1017.7 98.7 H1020.9" fill="none" stroke="#475569" stroke-width="1.45" stroke-linecap="round" stroke-linejoin="round"/><path d="M1042.77 88.9 V99.2 M1040.37 96.6 L1042.77 99.3 L1045.17 96.6" fill="none" stroke="#475569" stroke-width="1.65" stroke-linecap="round" stroke-linejoin="round"/><path d="M1047.9 89.4 H1050.8 L1047.9 92.3 H1050.8" fill="none" stroke="#475569" stroke-width="1.45" stroke-linecap="round" stroke-linejoin="round"/><path d="M1047.1999999999998 98.80000000000001 L1049.25 95.1 L1051.3000000000002 98.80000000000001 M1048.1999999999998 97.4 H1050.3000000000002" fill="none" stroke="#475569" stroke-width="1.45" stroke-linecap="round" stroke-linejoin="round"/><path d="M1070.3 88.9 H1081.7 L1077.3 95.5 V99.2 L1074.8 97.7 V95.5 Z" fill="#475569" stroke="#475569" stroke-width="1.0" stroke-linejoin="round"/><circle cx="1145.74" cy="92.81" r="4.45" fill="none" stroke="#475569" stroke-width="1.5"/><path d="M1149.0 96.2 L1152.5 99.5" stroke="#475569" stroke-width="1.8" stroke-linecap="round"/><path d="M1186.79 91.24 L1183.82 94.03 L1186.79 97.01 M1195.53 91.24 L1198.5 94.03 L1195.53 97.01 M1192.74 88.5 L1189.39 99.6" fill="none" stroke="#8b5cf6" stroke-width="1.8" stroke-linecap="round" stroke-linejoin="round"/><path d="M1421 125 H1428.6 L1424.8 132 Z" fill="#94a3b8"/><path d="M20.87 160.85 L17.24 164.3 L20.87 167.7 M31.06 160.85 L34.7 164.3 L31.06 167.7 M27.9 158.1 L24.05 170.6" fill="none" stroke="#64748b" stroke-width="2.2" stroke-linecap="round" stroke-linejoin="round"/><path fill-rule="evenodd" fill="#64748b" d="M20.5 199.7 H31.5 A2 2 0 0 1 33.5 201.7 V210.9 A2 2 0 0 1 31.5 212.9 H20.5 A2 2 0 0 1 18.5 210.9 V201.7 A2 2 0 0 1 20.5 199.7 Z M20.38 203.4 H25.09 V206.5 H20.38Z M26.8 203.4 H31.64 V206.5 H26.8Z M20.38 208.1 H25.09 V211.1 H20.38Z M26.8 208.1 H31.64 V211.1 H26.8Z"/><ellipse cx="26.05" cy="243.8" rx="6.57" ry="2.98" fill="#64748b"/><rect x="19.48" y="243.8" width="13.14" height="9.2" fill="#64748b"/><ellipse cx="26.05" cy="253" rx="6.57" ry="2.98" fill="#64748b"/><path d="M19.2 246.4 A6.85 1.6 0 0 0 32.9 246.4 M19.2 250.9 A6.85 1.6 0 0 0 32.9 250.9" fill="none" stroke="#fff" stroke-width="1.1"/><path d="M19.5 285.3 V293.8 A2 2 0 0 0 21.5 295.8 H31.8" fill="none" stroke="#64748b" stroke-width="2.1" stroke-linecap="round" stroke-linejoin="round"/><path d="M23.65 286.57 H28.5 M23.65 289.35 H26.7 M23.65 292.13 H30.4" stroke="#64748b" stroke-width="1.85" stroke-linecap="round"/><path d="M18.4 332.2 L19.95 332.6 L23.66 337.6 L26.4 327.6 Q26.7 326.85 27.5 326.85 H33.3" fill="none" stroke="#64748b" stroke-width="2.1" stroke-linecap="round" stroke-linejoin="round"/><path d="M30.0 332.5 L33.5 336.0 M33.5 332.5 L30.0 336.0" stroke="#64748b" stroke-width="2.1" stroke-linecap="round"/><rect x="18.56" y="377.87" width="12.04" height="5.56" rx="1.85" fill="#64748b"/><path d="M31.2 380.0 Q33.1 380.6 33.1 382.5 Q33.1 385.97 30.8 385.97 H26.4 Q25.0 385.97 25.0 387.6" fill="none" stroke="#64748b" stroke-width="1.6" stroke-linecap="round"/><rect x="23.19" y="387.36" width="3.71" height="5.54" rx="1" fill="#64748b"/><path d="M22.27 421.6 V432.8 M19.46 430.0 L22.27 433.0 L25.08 430.0" fill="none" stroke="#64748b" stroke-width="2.1" stroke-linecap="round" stroke-linejoin="round"/><path d="M27.270000000000003 426.29999999999995 L29.795 421.5 L32.32 426.29999999999995 M28.270000000000003 424.9 H31.32" fill="none" stroke="#64748b" stroke-width="1.8" stroke-linecap="round" stroke-linejoin="round"/><path d="M27.83 429.26 H31.99 L27.83 432.95 H31.99" fill="none" stroke="#64748b" stroke-width="1.8" stroke-linecap="round" stroke-linejoin="round"/><path d="M25.97 473.4 L32.9 476.57 L25.97 479.8 L19.1 476.57 Z" fill="#64748b" stroke="#64748b" stroke-width="0.9" stroke-linejoin="round"/><path d="M19.6 480.2 L25.97 483.0 L32.4 480.2 M19.6 483.9 L25.97 486.75 L32.4 483.9" fill="none" stroke="#64748b" stroke-width="2.0" stroke-linecap="round" stroke-linejoin="round"/><rect x="24.05" y="805.2" width="3.84" height="4" rx="0.8" transform="rotate(0 25.97 812.3)" fill="#64748b"/><rect x="24.05" y="805.2" width="3.84" height="4" rx="0.8" transform="rotate(60 25.97 812.3)" fill="#64748b"/><rect x="24.05" y="805.2" width="3.84" height="4" rx="0.8" transform="rotate(120 25.97 812.3)" fill="#64748b"/><rect x="24.05" y="805.2" width="3.84" height="4" rx="0.8" transform="rotate(180 25.97 812.3)" fill="#64748b"/><rect x="24.05" y="805.2" width="3.84" height="4" rx="0.8" transform="rotate(240 25.97 812.3)" fill="#64748b"/><rect x="24.05" y="805.2" width="3.84" height="4" rx="0.8" transform="rotate(300 25.97 812.3)" fill="#64748b"/><circle cx="25.97" cy="812.3" r="5.3" fill="#64748b"/><circle cx="25.97" cy="812.3" r="2.4" fill="#fff"/><path d="M20.2 856.3 V864.7 M16 860.5 H24.4" stroke="#94a3b8" stroke-width="1.5" stroke-linecap="round"/><defs><linearGradient id="wg" x1="0" y1="0" x2="0" y2="1"><stop offset="0" stop-color="#ffe14d"/><stop offset="1" stop-color="#f7bb00"/></linearGradient></defs><path d="M808.5 391.9 L813.6 400.7 H803.4 Z" fill="url(#wg)" stroke="#f9c80e" stroke-width="0.9" stroke-linejoin="round"/><path d="M808.5 393.9 V397.3" stroke="#111" stroke-width="1.15" stroke-linecap="round"/><circle cx="808.5" cy="399.3" r="0.75" fill="#111"/></svg>
<div class="a" style="left:1440px;top:-200px;width:300px;height:1300px;background:#fff;box-shadow:0 0 33px rgba(0,0,0,0.27)"></div>
</body></html>
